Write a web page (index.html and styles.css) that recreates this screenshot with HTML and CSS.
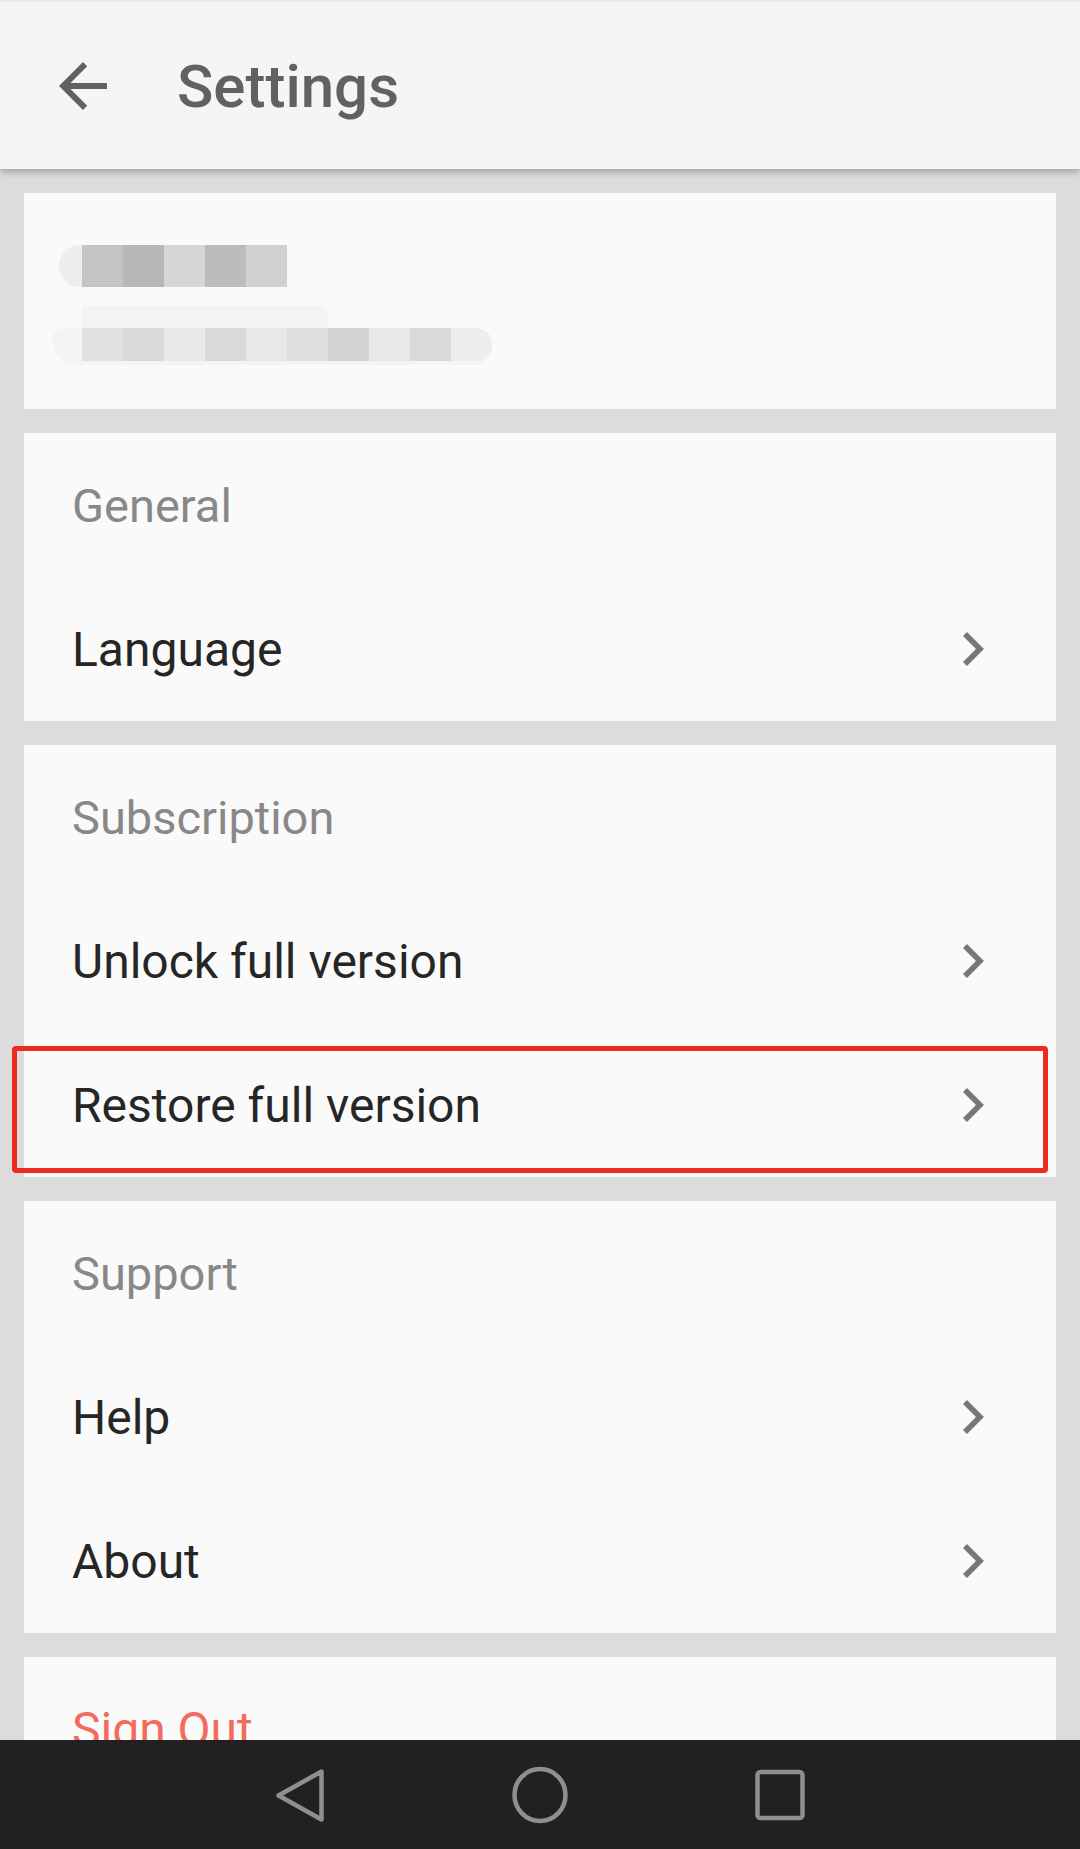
FILE: index.html
```html
<!DOCTYPE html>
<html lang="en">
<head>
<meta charset="utf-8">
<title>Settings</title>
<link rel="stylesheet" href="styles.css">
</head>
<body>
<div class="screen">
  <header class="appbar">
    <svg class="back" viewBox="0 0 24 24" width="72" height="72"><path d="M20 11H7.83l5.59-5.59L12 4l-8 8 8 8 1.41-1.41L7.83 13H20v-2z"/></svg>
    <h1 class="title">Settings</h1>
  </header>
  <main class="content">
    <section class="card profile">
      <div class="blur-line1">
        <span class="px p1"></span><span class="px p2"></span><span class="px p3"></span><span class="px p4"></span><span class="px p5"></span>
      </div>
      <div class="blur-line2">
        <div class="top-band"></div>
        <div class="bottom-band">
          <span class="px q1"></span><span class="px q2"></span><span class="px q3"></span><span class="px q4"></span><span class="px q5"></span><span class="px q6"></span><span class="px q7"></span><span class="px q8"></span><span class="px q9"></span><span class="px q10"></span>
        </div>
      </div>
    </section>

    <section class="card">
      <div class="row head">General</div>
      <div class="row item"><span>Language</span><svg class="chev" viewBox="8.59 6 7.41 12" preserveAspectRatio="none"><path d="M10 6L8.59 7.41 13.17 12l-4.58 4.59L10 18l6-6z"/></svg></div>
    </section>

    <section class="card">
      <div class="row head">Subscription</div>
      <div class="row item"><span>Unlock full version</span><svg class="chev" viewBox="8.59 6 7.41 12" preserveAspectRatio="none"><path d="M10 6L8.59 7.41 13.17 12l-4.58 4.59L10 18l6-6z"/></svg></div>
      <div class="row item highlighted"><span>Restore full version</span><svg class="chev" viewBox="8.59 6 7.41 12" preserveAspectRatio="none"><path d="M10 6L8.59 7.41 13.17 12l-4.58 4.59L10 18l6-6z"/></svg><div class="redbox"></div></div>
    </section>

    <section class="card">
      <div class="row head">Support</div>
      <div class="row item"><span>Help</span><svg class="chev" viewBox="8.59 6 7.41 12" preserveAspectRatio="none"><path d="M10 6L8.59 7.41 13.17 12l-4.58 4.59L10 18l6-6z"/></svg></div>
      <div class="row item"><span>About</span><svg class="chev" viewBox="8.59 6 7.41 12" preserveAspectRatio="none"><path d="M10 6L8.59 7.41 13.17 12l-4.58 4.59L10 18l6-6z"/></svg></div>
    </section>

    <section class="card">
      <div class="row item signout">Sign Out</div>
    </section>
  </main>
  <nav class="navbar">
    <svg class="nav-icon" width="60" height="60" viewBox="0 0 60 60"><path d="M51.5 6.5 L51.5 54.5 L8.5 30.5 Z" fill="none" stroke="#8f8f8f" stroke-width="4.5" stroke-linejoin="round"/></svg>
    <svg class="nav-icon" width="60" height="60" viewBox="0 0 60 60"><ellipse cx="30" cy="30" rx="25.5" ry="26" fill="none" stroke="#8f8f8f" stroke-width="4.5"/></svg>
    <svg class="nav-icon" width="60" height="60" viewBox="0 0 60 60"><rect x="7.5" y="7" width="45" height="46" rx="3" fill="none" stroke="#8f8f8f" stroke-width="4.5"/></svg>
  </nav>
</div>
</body>
</html>
```

FILE: styles.css
```css
* { box-sizing: border-box; }
html, body { margin: 0; padding: 0; }
body {
  width: 1080px;
  height: 1849px;
  overflow: hidden;
  background: #dcdcdc;
  font-family: Roboto, "Noto Sans", "Liberation Sans", sans-serif;
}
.screen {
  display: flex;
  flex-direction: column;
  height: 1849px;
}
.appbar {
  flex: 0 0 169px;
  display: flex;
  align-items: center;
  background: #f5f5f5;
  border-top: 2px solid #e8e8e8;
  box-shadow: 0 3px 7px rgba(0,0,0,0.28);
  position: relative;
  z-index: 2;
}
.back {
  margin-left: 47px;
  fill: #616161;
  flex: none;
}
.title {
  margin: 0 0 0 58px;
  font-size: 60px;
  font-weight: 500;
  color: #616161;
  line-height: 1;
  padding-top: 2px;
}
.content {
  flex: 1;
  overflow: hidden;
  padding: 24px;
  display: flex;
  flex-direction: column;
  gap: 24px;
}
.card {
  background: #fafafa;
  flex: none;
}
.profile {
  height: 216px;
  padding: 52px 0 0 0;
}
.blur-line1 {
  display: flex;
  margin-left: 35px;
  width: 228px;
  height: 42px;
  padding-left: 23px;
  background: #ededed;
  border-radius: 21px 0 0 21px;
}
.px { flex: none; width: 41px; }
.blur-line1 .px { height: 42px; }
.p1 { background: #c4c4c4; }
.p2 { background: #b7b7b7; }
.p3 { background: #d6d6d6; }
.p4 { background: #bcbcbc; }
.p5 { background: #d1d1d1; }
.blur-line2 {
  display: flex;
  flex-direction: column;
  margin: 18px 0 0 28px;
  width: 440px;
}
.top-band {
  margin-left: 30px;
  width: 246px;
  height: 23px;
  background: #f3f3f3;
  border-radius: 4px 8px 0 0;
}
.bottom-band {
  display: flex;
  height: 37px;
  padding: 0 0 4px 30px;
  background: #f4f4f4;
  border-radius: 14px 18px 18px 26px;
}
.bottom-band .px { height: 33px; }
.q1 { background: #e0e0e0; }
.q2 { background: #d9d9d9; }
.q3 { background: #e8e8e8; }
.q4 { background: #d9d9d9; }
.q5 { background: #e8e8e8; }
.q6 { background: #dedede; }
.q7 { background: #d4d4d4; }
.q8 { background: #e8e8e8; }
.q9 { background: #dadada; }
.q10 { background: #ededed; border-radius: 0 16px 16px 0; }
.row {
  height: 144px;
  display: flex;
  align-items: center;
  padding: 0 72px 0 48px;
  font-size: 48px;
  position: relative;
}
.head {
  color: #888888;
  font-size: 47px;
}
.item {
  color: #262626;
  justify-content: space-between;
}
.chev {
  width: 21px;
  height: 34px;
  fill: #777777;
  flex: none;
}
.signout {
  color: #f36b5c;
}
.redbox {
  position: absolute;
  left: -12px;
  top: 13px;
  width: 1036px;
  height: 127px;
  border: 5px solid #ec2a20;
  border-radius: 4px;
}
.navbar {
  flex: 0 0 109px;
  background: #212121;
  display: flex;
  align-items: center;
  justify-content: center;
  gap: 180px;
  position: relative;
  z-index: 3;
}
.nav-icon { flex: none; }
```
